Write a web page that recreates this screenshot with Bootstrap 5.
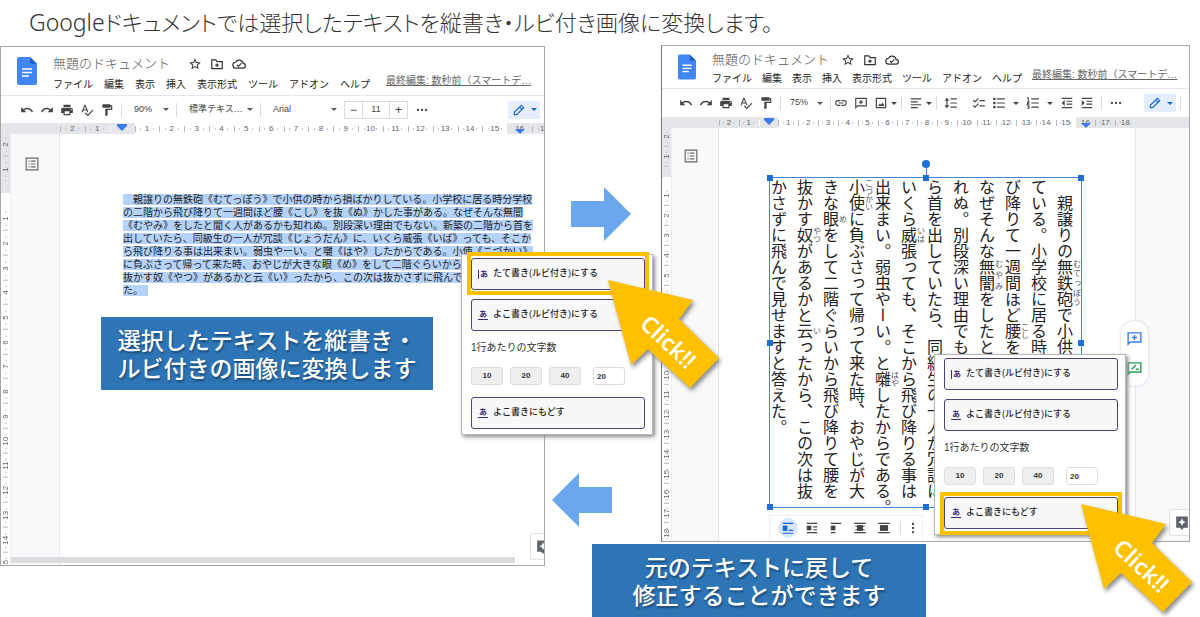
<!DOCTYPE html>
<html lang="ja">
<head>
<meta charset="utf-8">
<meta name="viewport" content="width=device-width, initial-scale=1">
<title>縦書き・ルビ付き画像に変換</title>
<link href="https://cdn.jsdelivr.net/npm/bootstrap@5.3.0/dist/css/bootstrap.min.css" rel="stylesheet">
<style>
body{font-family:"Liberation Sans","Noto Sans CJK JP",sans-serif;color:#333;background:#fff;overflow-x:hidden}
.ic{width:14px;height:14px;fill:currentColor;flex:none;display:block}
.ln{fill:none;stroke:currentColor;stroke-width:2}
.lead-title{font-family:"Noto Sans CJK JP",sans-serif;font-size:22px;font-weight:300;line-height:42px;height:45px;padding-left:29px;color:#333;font-feature-settings:"palt";margin:0;white-space:nowrap}
.lead-title span{font-family:"Noto Sans",sans-serif;font-size:23px}
.pane-left{flex:545 1 0;min-width:0;z-index:2;margin-top:1px}
.pane-right{flex:655 1 0;min-width:0}
.between{width:116px;flex:none}
.win{border:1px solid #a6a6a6;background:#fff;position:relative;min-width:0}
.win-b{border-left-color:#777;margin-right:10px}
.win-head{height:49px;padding:9px 0 0 16px;border-bottom:1px solid #e4e6e9}
.win-b .win-head{height:43px;padding-top:6px}
.doc-name{font-size:13px;line-height:16px;color:#555;font-weight:300;width:135px}
.win-b .doc-name{width:129px}
.doc-logo{width:20px;height:28px;margin:1px 16px 0 0;flex:none}
.win-b .doc-logo{width:18px;height:26px;margin:2px 16px 0 0}
.menus{font-size:10px;line-height:14px;gap:11px;white-space:nowrap;margin-top:6px}
.win-b .menus{gap:10px;margin-top:4px}
.menus a{color:#222;text-decoration:none}
.menus a.last-edit{color:#666;text-decoration:underline;margin:-4px 0 0 5px}
.win-b .menus a.last-edit{margin-left:0}
.tools{height:27px;padding-left:16px;color:#444;overflow:hidden}
.win-b .tools{padding-left:14px;height:28px}
.tool{width:20px;height:20px;padding:0;border:0;background:none;color:inherit;display:flex;align-items:center;justify-content:center;flex:none}
.tool.slim{width:16px}
.car{width:0;height:0;border:3px solid transparent;border-top-color:currentColor;border-bottom:0;display:block}
.vr-tool{width:1px;height:14px;background:#dadce0;margin:0 4px;flex:none}
.pick{appearance:none;border:0;padding:0;margin:0;font-size:9px;color:#444;background:url("data:image/svg+xml,%3Csvg xmlns='http://www.w3.org/2000/svg' viewBox='0 0 6 3'%3E%3Cpath d='M0 0h6L3 3z' fill='%23555'/%3E%3C/svg%3E") no-repeat right 3px center/6px 3px;height:18px;margin-left:8px}
.pick-zoom{width:38px}.pick-style{width:67px}.pick-font{width:67px}
.win-b .pick-zoom{margin-left:5px;width:36px}
.size-box{border:1px solid #dadce0;height:18px;margin-left:4px;display:flex}
.size-box button{width:17px;border:0;background:none;padding:0;font-size:12px;line-height:14px;color:#444}
.size-box input{width:28px;border:solid #dadce0;border-width:0 1px;padding:0;text-align:center;font-size:9px;color:#444}
.mode-btn{width:32px;height:18px;background:#e4eefe;border:0;border-radius:2px;color:#1a66d2;padding:0;display:flex;align-items:center;justify-content:center;gap:5px;flex:none}
.ruler-h{height:11px;background:#e4e6ea;overflow:hidden;font-size:8px;line-height:11px;color:#666;position:relative}
.ruler-h .scale{display:flex;width:497px;margin-left:59px;height:11px}
.win-b .ruler-h .scale{width:416px;margin-left:57px}
.tick{flex:1 1 0;text-align:center;background:linear-gradient(#b5b8bd,#b5b8bd) 0 50%/1px 6px no-repeat,linear-gradient(#c4c7cb,#c4c7cb) 23% 50%/1px 2px no-repeat,linear-gradient(#c4c7cb,#c4c7cb) 77% 50%/1px 2px no-repeat}
.tick.lit{background-color:#fff}
.tick.origin{background-image:linear-gradient(90deg,#e4e6ea 50%,#fff 50%)}
.tick.limit{background-image:linear-gradient(90deg,#fff 50%,#e4e6ea 50%)}
.stop{position:relative}
.stop::after{content:"";position:absolute;left:50%;top:3px;margin-left:-5px;border:5px solid transparent;border-top:5px solid #3b7de8;border-bottom:0}
.limit.stop::after{top:6px;margin-left:-5px}
.origin.stop::before{content:"";position:absolute;left:50%;top:1px;margin-left:-5px;width:10px;height:2px;background:#3b7de8}
.ruler-v{width:10px;flex:none;font-size:8px;line-height:10px;color:#666;overflow:hidden;position:relative;border-right:1px solid #eceef0}
.ruler-v .scale{position:absolute;left:0;top:-2px;width:10px;height:445px;display:flex;flex-direction:column}
.win-b .ruler-v .scale{height:416px;top:-1px}
.ruler-v .tick{background:linear-gradient(#b5b8bd,#b5b8bd) 50% 0/5px 1px no-repeat,linear-gradient(#c4c7cb,#c4c7cb) 50% 23%/2px 1px no-repeat,linear-gradient(#c4c7cb,#c4c7cb) 50% 77%/2px 1px no-repeat;writing-mode:vertical-rl;transform:rotate(180deg)}
.ruler-v .tick.dim{background-color:#e4e6ea}
.ruler-v .tick.origin{background:linear-gradient(#fff 50%,#e4e6ea 50%)}
.win-body{min-height:431px;position:relative}
.win-b .win-body{min-height:413px}
.gutter{width:49px;background:#f8f9fb;border-right:1px solid #e3e5e8;flex:none;padding:23px 0 0 14px;color:#666}
.win-b .gutter{width:47px;padding:21px 0 0 12px}
.side-space{background:#f8f9fb}
.sheet{padding:59px 0 0 63px;min-width:0}
.novel{font-size:10px;line-height:13px;white-space:nowrap;margin:0;color:#222}
.novel span{background:#b4d2fa}
.hbar{position:absolute;left:10px;bottom:2px;right:29px;height:6px;background:#dadce0}
.explore{position:absolute;right:0;background:#fff;border:1px solid #e0e2e5;border-right:0;border-radius:3px 0 0 3px;width:14px;height:27px;bottom:5px;color:#5f6368;overflow:hidden;padding:0 0 0 5px}
.win-b .explore{width:20px}
.caption{background:#2e75b6;color:#fff;font-size:23px;font-weight:500;line-height:28px;text-align:center;padding:8px 0;width:332px;text-shadow:1px 2px 2px #1b4a78;white-space:nowrap;font-family:"Noto Sans CJK JP",sans-serif;margin:0}
.caption-a{position:absolute;left:100px;top:183px;height:73px}
.caption-b{margin:2px 0 0 47px;width:334px;height:73px}
.sheet-b{width:417px;flex:none;padding:49px 0 0 50px;border-right:1px solid #e3e5e8}
.picked{width:313px;height:331px;border:1px solid #3f86d8;position:relative;padding-top:1px;flex:none}
.tategaki{display:flex;flex-direction:row-reverse;font-family:"Noto Sans CJK JP",sans-serif;font-size:16px;color:#222;width:311px}
.tategaki p{writing-mode:vertical-rl;width:26px;margin:0;line-height:32px;white-space:nowrap;flex:none;height:336px}
.tategaki rt{font-size:8px;line-height:8px;color:#555}
.grip{position:absolute;width:6px;height:6px;background:#1f6fd6;margin:-3px}
.grip-turn{border-radius:50%;width:8px;height:8px;margin:-4px;top:-14px}
.stem{position:absolute;left:50%;top:-14px;height:14px;width:1px;background:#3f86d8}
.wrap-tools{width:154px;height:24px;margin-top:7px;border:1px solid #eceef0;border-bottom:0;display:flex;align-items:center;padding-left:6px;color:#444}
.wrap-tools .tool{width:24px}
.wrap-tools .tool.slim{width:16px}
.wrap-tools .tool.on{color:#1a66d2;background:#d9e7fd;border-radius:50%;width:20px;margin:0 2px}
.side-pill{position:absolute;right:41px;top:193px;width:27px;height:65px;background:#fff;border-radius:13px;box-shadow:0 0 3px #c8ccd2;display:flex;flex-direction:column;align-items:center;justify-content:space-around;padding:2px 0}
.side-pill .tool{color:#3b7de8}.side-pill .tool+.tool{color:#2a9a55}
.side-pill .ic{width:17px;height:17px}
.pop{position:absolute;width:192px;height:181px;background:#fff;border:1px solid #b8b8b8;box-shadow:2px 2px 4px #8a8a8a;padding:3px 8px 0 9px;z-index:3}
.pop-a{right:-109px;top:120px}
.pop-b{right:63px;top:226px}
.act{display:flex;align-items:center;width:174px;height:32px;border:1px solid #4b4377;border-radius:3px;background:#f8f8f8;color:#222;font-size:9px;font-weight:500;padding:0 0 0 6px;margin-bottom:9px}
.kana{color:#3b2c78;font-size:8px;font-weight:700;line-height:9px;margin-right:5px;padding:0 1px}
.kana-v{border-left:1px solid;padding:0 0 0 1px}
.kana-h{border-bottom:1px solid}
.pop label{font-size:10px;line-height:16px;display:block;margin-bottom:11px;color:#333}
.num{width:32px;height:18px;border:1px solid #ddd;border-radius:3px;background:#efefef;font-size:8px;font-weight:700;color:#333;padding:0}
.pop input.num{background:#fff;text-align:left;padding-left:3px;margin-left:5px}
.nums{gap:7px;margin-bottom:12px}
.ring{position:absolute;left:5px;width:182px;height:43px;border:4px solid #ffc000;pointer-events:none}
.pop-a .ring{top:-3px}.pop-b .ring{top:137px}
.pointer{position:absolute;width:120px;height:116px;left:144px;overflow:visible;pointer-events:none;filter:drop-shadow(2px 3px 2px #8a8a8a)}
.pop-a .pointer{top:21px}.pop-b .pointer{top:145px}
.pointer text{font-family:"Noto Sans","Open Sans",sans-serif;font-size:23px;font-weight:600;fill:#fff}
.flow-arrow{width:60px;height:54px;fill:#6aa7ec;display:block}
.flow-r{margin:142px 0 0 26px}.flow-l{margin:232px 0 0 7px}
</style>
</head>
<body>
<svg width="0" height="0" class="position-absolute" aria-hidden="true">
<symbol id="doc" viewBox="0 0 20 28"><path d="M2 0h11l7 7v19a2 2 0 0 1-2 2H2a2 2 0 0 1-2-2V2a2 2 0 0 1 2-2z" fill="#4285f4"/><path d="M13 0l7 7h-5a2 2 0 0 1-2-2z" fill="#1f5fcb"/><path d="M5 12h10M5 15.500h10M5 19h7" stroke="#fff" stroke-width="1.500"/></symbol>
<symbol id="star" viewBox="0 0 24 24"><path d="M22 9.240l-7.190-.62L12 2 9.190 8.630 2 9.240l5.460 4.730L5.820 21 12 17.270 18.180 21l-1.630-7.030L22 9.240zM12 15.400l-3.760 2.270 1-4.280-3.320-2.880 4.380-.38L12 6.100l1.710 4.040 4.380.38-3.320 2.880 1 4.280L12 15.400z"/></symbol>
<symbol id="move" viewBox="0 0 24 24"><path class="ln" d="M3 5h7l2 3h9v12H3zM12 11v6M9 14h6"/></symbol>
<symbol id="cloud" viewBox="0 0 24 24"><path class="ln" d="M7 19a5 5 0 0 1-1-10 7 7 0 0 1 13 2 4 4 0 0 1 0 8zM8.500 13.500l2.500 2.500 5-5"/></symbol>
<symbol id="undo" viewBox="0 0 24 24"><path d="M12.500 8c-2.650 0-5.050.99-6.900 2.600L2 7v9h9l-3.620-3.620c1.390-1.160 3.160-1.880 5.120-1.880 3.540 0 6.550 2.310 7.600 5.500l2.370-.78C21.080 11.030 17.150 8 12.500 8z"/></symbol>
<symbol id="redo" viewBox="0 0 24 24"><path transform="matrix(-1 0 0 1 24 0)" d="M12.500 8c-2.650 0-5.050.99-6.900 2.600L2 7v9h9l-3.620-3.620c1.390-1.160 3.160-1.880 5.120-1.880 3.540 0 6.550 2.310 7.600 5.500l2.370-.78C21.080 11.030 17.150 8 12.500 8z"/></symbol>
<symbol id="print" viewBox="0 0 24 24"><path d="M19 8H5c-1.660 0-3 1.340-3 3v6h4v4h12v-4h4v-6c0-1.660-1.340-3-3-3zm-3 11H8v-5h8v5zm3-7c-.55 0-1-.45-1-1s.45-1 1-1 1 .45 1 1-.45 1-1 1zm-1-9H6v4h12V3z"/></symbol>
<symbol id="spell" viewBox="0 0 24 24"><path d="M12.450 16h2.090L9.430 3H7.570L2.460 16h2.090l1.120-3h5.640l1.140 3zm-6.020-5L8.500 5.480 10.570 11H6.430zm15.160.59l-8.090 8.090L9.830 16l-1.410 1.410 5.090 5.090L23 13l-1.410-1.410z"/></symbol>
<symbol id="paint" viewBox="0 0 24 24"><path d="M18 4V3c0-.55-.45-1-1-1H5c-.55 0-1 .45-1 1v4c0 .55.45 1 1 1h12c.55 0 1-.45 1-1V6h1v4H9v11c0 .55.45 1 1 1h2c.55 0 1-.45 1-1v-9h8V4h-3z"/></symbol>
<symbol id="link" viewBox="0 0 24 24"><path d="M3.900 12c0-1.710 1.390-3.100 3.100-3.100h4V7H7c-2.760 0-5 2.240-5 5s2.240 5 5 5h4v-1.900H7c-1.710 0-3.100-1.390-3.100-3.100zM8 13h8v-2H8v2zm9-6h-4v1.900h4c1.710 0 3.100 1.390 3.100 3.100s-1.390 3.100-3.100 3.100h-4V17h4c2.760 0 5-2.240 5-5s-2.240-5-5-5z"/></symbol>
<symbol id="note" viewBox="0 0 24 24"><path class="ln" d="M3 20V4h18v13H6zM12 7v7M8.500 10.500h7"/></symbol>
<symbol id="suggest" viewBox="0 0 24 24"><path class="ln" d="M3 20V4h18v13H6zM8 13l6-6M14 13h4"/></symbol>
<symbol id="image" viewBox="0 0 24 24"><path class="ln" d="M4 4h16v16H4z"/><path d="M7 17l3-4 2 2 3-4 3 6z"/></symbol>
<symbol id="align" viewBox="0 0 24 24"><path class="ln" d="M3 5h18M3 10h12M3 15h18M3 20h12"/></symbol>
<symbol id="spacing" viewBox="0 0 24 24"><path class="ln" d="M11 5h11M11 12h11M11 19h11M5 6v12"/><path d="M1 8l4-5 4 5zM1 16l4 5 4-5z"/></symbol>
<symbol id="check" viewBox="0 0 24 24"><path class="ln" d="M13 8h9M13 17h9M2 7l3 3 6-6M2 16l3 3 6-6"/></symbol>
<symbol id="bullets" viewBox="0 0 24 24"><path class="ln" d="M8 5h14M8 12h14M8 19h14"/><path d="M2 3h4v4H2zM2 10h4v4H2zM2 17h4v4H2z"/></symbol>
<symbol id="numbers" viewBox="0 0 24 24"><path class="ln" d="M9 5h13M9 12h13M9 19h13M2 3h2v5M2 10h3l-3 4h4M2 17h3v4H2"/></symbol>
<symbol id="outdent" viewBox="0 0 24 24"><path class="ln" d="M3 4h18M11 9h10M11 14h10M3 20h18"/><path d="M8 7v10l-5-5z"/></symbol>
<symbol id="indent" viewBox="0 0 24 24"><path class="ln" d="M3 4h18M11 9h10M11 14h10M3 20h18"/><path d="M3 7v10l5-5z"/></symbol>
<symbol id="more" viewBox="0 0 24 24"><circle cx="5" cy="12" r="2"/><circle cx="12" cy="12" r="2"/><circle cx="19" cy="12" r="2"/></symbol>
<symbol id="dots" viewBox="0 0 24 24"><circle cx="12" cy="5" r="2"/><circle cx="12" cy="12" r="2"/><circle cx="12" cy="19" r="2"/></symbol>
<symbol id="pencil" viewBox="0 0 24 24"><path class="ln" d="M4 20v-4L16 4l4 4L8 20zM13 7l4 4" stroke-width="2.500"/></symbol>
<symbol id="outline" viewBox="0 0 24 24"><path class="ln" d="M2 2h20v20H2zM10 7h8M10 12h8M10 17h8M6 7h2M6 12h2M6 17h2"/></symbol>
<symbol id="spark" viewBox="0 0 24 24"><path fill-rule="evenodd" d="M2 1h20v19h-7l-3 4-3-4H2zM12 4l-2 4.500L5.500 10.500l4.500 2L12 17l2-4.500 4.500-2-4.500-2z"/></symbol>
<symbol id="w1" viewBox="0 0 24 24"><path d="M3 8h8v9H3z"/><path class="ln" d="M3 4h18M13 16h8M3 21h18" stroke-width="3"/></symbol>
<symbol id="w2" viewBox="0 0 24 24"><path d="M3 8h8v8H3z"/><path class="ln" d="M3 4h18M14 10h7M14 15h7M3 20h18" stroke-width="2.500"/></symbol>
<symbol id="w3" viewBox="0 0 24 24"><path d="M3 8h8v8H3z"/><path class="ln" d="M3 4h18M3 20h8" stroke-width="2.500"/></symbol>
<symbol id="w4" viewBox="0 0 24 24"><path d="M7 7h10v10H7z"/><path class="ln" d="M2 4h20M4 9h16M4 15h16M2 20h20" stroke-width="2"/></symbol>
<symbol id="w5" viewBox="0 0 24 24"><path d="M5 7h14v10H5z"/><path class="ln" d="M2 4h20M2 20h20" stroke-width="2.500"/></symbol>
</svg>

<h1 class="lead-title"><span>Google</span>ドキュメントでは選択したテキストを縦書き・ルビ付き画像に変換します。</h1>

<main class="d-flex align-items-start">
<section class="pane-left position-relative">
 <div class="win win-a">
  <header class="win-head d-flex">
   <svg class="doc-logo"><use href="#doc"/></svg>
   <div>
    <div class="d-flex align-items-center"><div class="doc-name">無題のドキュメント</div>
     <div class="d-flex gap-2"><svg class="ic"><use href="#star"/></svg><svg class="ic"><use href="#move"/></svg><svg class="ic"><use href="#cloud"/></svg></div></div>
    <nav class="menus d-flex"><a href="#">ファイル</a><a href="#">編集</a><a href="#">表示</a><a href="#">挿入</a><a href="#">表示形式</a><a href="#">ツール</a><a href="#">アドオン</a><a href="#">ヘルプ</a><a href="#" class="last-edit">最終編集: 数秒前（スマートデ…</a></nav>
   </div>
  </header>
  <div class="tools d-flex align-items-center">
   <button class="tool" aria-label="元に戻す"><svg class="ic"><use href="#undo"/></svg></button><button class="tool" aria-label="やり直し"><svg class="ic"><use href="#redo"/></svg></button><button class="tool" aria-label="印刷"><svg class="ic"><use href="#print"/></svg></button><button class="tool" aria-label="スペル"><svg class="ic"><use href="#spell"/></svg></button><button class="tool" aria-label="書式"><svg class="ic"><use href="#paint"/></svg></button>
   <i class="vr-tool"></i><select class="pick pick-zoom" aria-label="ズーム"><option>90%</option></select>
   <i class="vr-tool"></i><select class="pick pick-style" aria-label="スタイル"><option>標準テキス…</option></select>
   <i class="vr-tool"></i><select class="pick pick-font" aria-label="フォント"><option>Arial</option></select>
   <div class="size-box"><button aria-label="小さく">−</button><input value="11" aria-label="サイズ"><button aria-label="大きく">+</button></div>
   <button class="tool ms-1" aria-label="その他"><svg class="ic"><use href="#more"/></svg></button>
   <button class="mode-btn ms-auto me-1" aria-label="編集モード"><svg class="ic"><use href="#pencil"/></svg><i class="car"></i></button>
  </div>
  <div class="ruler-h"><div class="scale" data-from="2" data-to="17"></div></div>
  <div class="win-body d-flex">
   <div class="ruler-v"><div class="scale" data-from="2" data-to="15"></div></div>
   <aside class="gutter"><svg class="ic"><use href="#outline"/></svg></aside>
   <article class="sheet flex-fill">
    <p class="novel"><span>　親譲りの無鉄砲《むてっぽう》で小供の時から損ばかりしている。小学校に居る時分学校</span><br><span>の二階から飛び降りて一週間ほど腰《こし》を抜《ぬ》かした事がある。なぜそんな無闇</span><br><span>《むやみ》をしたと聞く人があるかも知れぬ。別段深い理由でもない。新築の二階から首を</span><br><span>出していたら、同級生の一人が冗談《じょうだん》に、いくら威張《いば》っても、そこか</span><br><span>ら飛び降りる事は出来まい。弱虫やーい。と囃《はや》したからである。小使《こづかい》</span><br><span>に負ぶさって帰って来た時、おやじが大きな眼《め》をして二階ぐらいから飛</span><br><span>抜かす奴《やつ》があるかと云《い》ったから、この次は抜かさずに飛んで見</span><br><span>た。　</span></p>
   </article>
   <i class="hbar"></i>
   <button class="explore" aria-label="データ探索"><svg class="ic"><use href="#spark"/></svg></button>
   <p class="caption caption-a">選択したテキストを縦書き・<br>ルビ付きの画像に変換します</p>
   <div class="pop pop-a">
    <button class="act"><span class="kana kana-v">あ</span>たて書き(ルビ付き)にする</button>
    <button class="act"><span class="kana kana-h">あ</span>よこ書き(ルビ付き)にする</button>
    <label for="chars-a">1行あたりの文字数</label>
    <div class="nums d-flex"><button class="num">10</button><button class="num">20</button><button class="num">40</button><input class="num" id="chars-a" value="20"></div>
    <button class="act"><span class="kana kana-h">あ</span>よこ書きにもどす</button>
    <i class="ring"></i>
    <svg class="pointer" viewBox="0 0 120 116"><path d="M2 4l85 20-14 19 40 39-29 30-42-39-17 16z" fill="#ffc000"/><text transform="translate(62 66) rotate(43)" text-anchor="middle" y="8">Click!!</text></svg>
   </div>
  </div>
 </div>
</section>

<section class="pane-right">
 <div class="d-flex">
  <div class="between">
   <svg class="flow-arrow flow-r" viewBox="0 0 60 54"><path d="M0 14h33V0l27 27-27 27V40H0z"/></svg>
   <svg class="flow-arrow flow-l" viewBox="0 0 60 54"><path d="M60 14H27V0L0 27l27 27V40h33z"/></svg>
  </div>
  <div class="win win-b flex-fill">
   <header class="win-head d-flex">
    <svg class="doc-logo"><use href="#doc"/></svg>
    <div>
     <div class="d-flex align-items-center"><div class="doc-name">無題のドキュメント</div>
      <div class="d-flex gap-2"><svg class="ic"><use href="#star"/></svg><svg class="ic"><use href="#move"/></svg><svg class="ic"><use href="#cloud"/></svg></div></div>
     <nav class="menus d-flex"><a href="#">ファイル</a><a href="#">編集</a><a href="#">表示</a><a href="#">挿入</a><a href="#">表示形式</a><a href="#">ツール</a><a href="#">アドオン</a><a href="#">ヘルプ</a><a href="#" class="last-edit">最終編集: 数秒前（スマートデ…</a></nav>
    </div>
   </header>
   <div class="tools d-flex align-items-center">
    <button class="tool" aria-label="元に戻す"><svg class="ic"><use href="#undo"/></svg></button><button class="tool" aria-label="やり直し"><svg class="ic"><use href="#redo"/></svg></button><button class="tool" aria-label="印刷"><svg class="ic"><use href="#print"/></svg></button><button class="tool" aria-label="スペル"><svg class="ic"><use href="#spell"/></svg></button><button class="tool" aria-label="書式"><svg class="ic"><use href="#paint"/></svg></button>
    <i class="vr-tool"></i><select class="pick pick-zoom" aria-label="ズーム"><option>75%</option></select>
    <i class="vr-tool me-0"></i><button class="tool" aria-label="リンク"><svg class="ic"><use href="#link"/></svg></button><button class="tool" aria-label="コメント"><svg class="ic"><use href="#note"/></svg></button><button class="tool" aria-label="画像"><svg class="ic"><use href="#image"/></svg></button><i class="car"></i>
    <i class="vr-tool"></i><button class="tool" aria-label="配置"><svg class="ic"><use href="#align"/></svg></button><i class="car"></i>
    <i class="vr-tool"></i><button class="tool" aria-label="行間"><svg class="ic"><use href="#spacing"/></svg></button><button class="tool ms-2" aria-label="チェックリスト"><svg class="ic"><use href="#check"/></svg></button><button class="tool" aria-label="箇条書き"><svg class="ic"><use href="#bullets"/></svg></button><i class="car mx-1"></i><button class="tool" aria-label="番号付き"><svg class="ic"><use href="#numbers"/></svg></button><i class="car mx-1"></i><button class="tool" aria-label="インデント減"><svg class="ic"><use href="#outdent"/></svg></button><button class="tool" aria-label="インデント増"><svg class="ic"><use href="#indent"/></svg></button>
    <i class="vr-tool"></i><button class="tool" aria-label="その他"><svg class="ic"><use href="#more"/></svg></button>
    <button class="mode-btn ms-auto" aria-label="編集モード"><svg class="ic"><use href="#pencil"/></svg><i class="car"></i></button><i class="vr-tool me-2"></i>
   </div>
   <div class="ruler-h"><div class="scale" data-from="2" data-to="18"></div></div>
   <div class="win-body d-flex">
    <div class="ruler-v"><div class="scale" data-from="2" data-to="18"></div></div>
    <aside class="gutter"><svg class="ic"><use href="#outline"/></svg></aside>
    <article class="sheet-b">
     <div class="picked">
      <div class="tategaki">
       <p>　親譲りの<ruby>無鉄砲<rt>むてっぽう</rt></ruby>で小供の時から損ばかりし</p>
       <p>ている。小学校に居る時分学校の二階から飛</p>
       <p>び降りて一週間ほど<ruby>腰<rt>こし</rt></ruby>を<ruby>抜<rt>ぬ</rt></ruby>かした事がある。</p>
       <p>なぜそんな<ruby>無闇<rt>むやみ</rt></ruby>をしたと聞く人があるかも知</p>
       <p>れぬ。別段深い理由でもない。新築の二階か</p>
       <p>ら首を出していたら、同級生の一人が冗談に、</p>
       <p>いくら<ruby>威<rt>いば</rt></ruby>張っても、そこから飛び降りる事は</p>
       <p>出来まい。弱虫やーい。と<ruby>囃<rt>はや</rt></ruby>したからである。</p>
       <p><ruby>小使<rt>こづかい</rt></ruby>に負ぶさって帰って来た時、おやじが大</p>
       <p>きな<ruby>眼<rt>め</rt></ruby>をして二階ぐらいから飛び降りて腰を</p>
       <p>抜かす<ruby>奴<rt>やつ</rt></ruby>があるかと<ruby>云<rt>い</rt></ruby>ったから、この次は抜</p>
       <p>かさずに飛んで見せますと答えた。</p>
      </div>
      <i class="stem"></i><i class="grip grip-turn start-50"></i>
      <i class="grip top-0 start-0"></i><i class="grip top-0 start-50"></i><i class="grip top-0 start-100"></i>
      <i class="grip top-50 start-0"></i><i class="grip top-50 start-100"></i>
      <i class="grip top-100 start-0"></i><i class="grip top-100 start-50"></i><i class="grip top-100 start-100"></i>
     </div>
     <div class="wrap-tools"><button class="tool on" aria-label="行内"><svg class="ic"><use href="#w1"/></svg></button><button class="tool" aria-label="折り返し"><svg class="ic"><use href="#w2"/></svg></button><button class="tool" aria-label="上下"><svg class="ic"><use href="#w3"/></svg></button><button class="tool" aria-label="背面"><svg class="ic"><use href="#w4"/></svg></button><button class="tool" aria-label="前面"><svg class="ic"><use href="#w5"/></svg></button><i class="vr-tool"></i><button class="tool slim" aria-label="メニュー"><svg class="ic"><use href="#dots"/></svg></button></div>
    </article>
    <div class="flex-fill side-space"></div>
    <div class="side-pill"><button class="tool" aria-label="コメント追加"><svg class="ic"><use href="#note"/></svg></button><button class="tool" aria-label="提案"><svg class="ic"><use href="#suggest"/></svg></button></div>
    <button class="explore" aria-label="データ探索"><svg class="ic"><use href="#spark"/></svg></button>
    <div class="pop pop-b">
     <button class="act"><span class="kana kana-v">あ</span>たて書き(ルビ付き)にする</button>
     <button class="act"><span class="kana kana-h">あ</span>よこ書き(ルビ付き)にする</button>
     <label for="chars-b">1行あたりの文字数</label>
     <div class="nums d-flex"><button class="num">10</button><button class="num">20</button><button class="num">40</button><input class="num" id="chars-b" value="20"></div>
     <button class="act"><span class="kana kana-h">あ</span>よこ書きにもどす</button>
     <i class="ring"></i>
     <svg class="pointer" viewBox="0 0 120 116"><path d="M2 4l85 20-14 19 40 39-29 30-42-39-17 16z" fill="#ffc000"/><text transform="translate(62 66) rotate(43)" text-anchor="middle" y="8">Click!!</text></svg>
    </div>
   </div>
  </div>
 </div>
 <p class="caption caption-b">元のテキストに戻して<br>修正することができます</p>
</section>
</main>
<script src="https://cdn.jsdelivr.net/npm/bootstrap@5.3.0/dist/js/bootstrap.bundle.min.js"></script>
<script>
// Fill the rulers: numbers count down to the margin, then up along the page.
document.querySelectorAll('.scale').forEach(function (scale) {
  var horizontal = scale.parentElement.classList.contains('ruler-h');
  for (var n = -scale.dataset.from; n <= +scale.dataset.to; n++) {
    var cell = document.createElement('span');
    cell.className = 'tick';
    if (n === 0) cell.classList.add('origin');
    else cell.textContent = Math.abs(n);
    if (horizontal) {
      if (n > 0 && n < 16) cell.classList.add('lit');
      if (n === 16) cell.classList.add('limit');
      if (n === 0 || n === 16) cell.classList.add('stop');
    } else if (n < 0) cell.classList.add('dim');
    scale.appendChild(cell);
  }
});
</script>
</body>
</html>
